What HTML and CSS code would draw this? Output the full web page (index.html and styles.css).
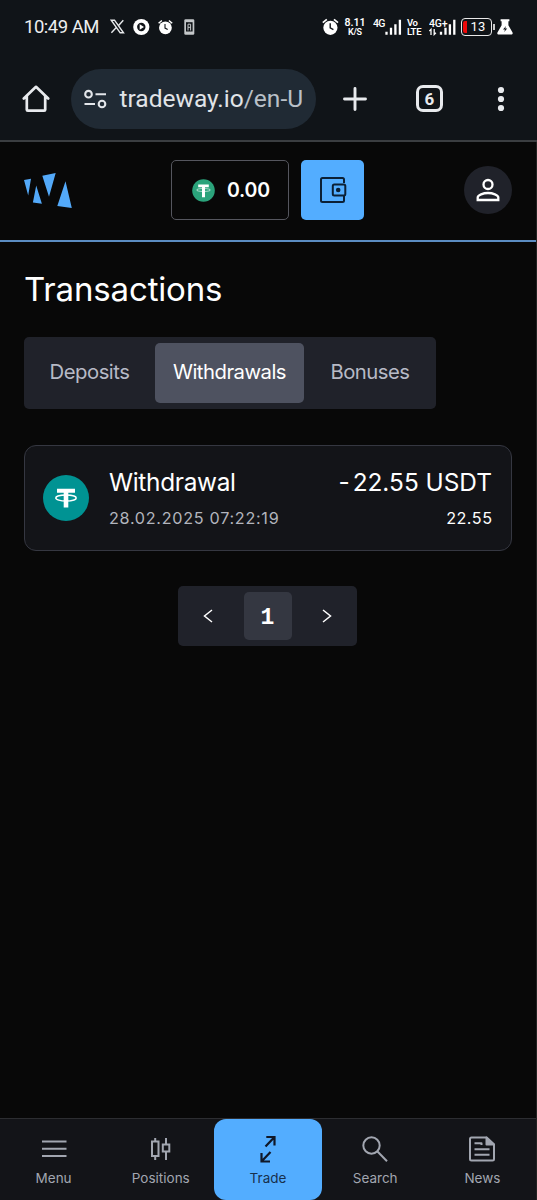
FILE: index.html
```html
<!DOCTYPE html>
<html lang="en">
<head>
<meta charset="utf-8">
<title>Transactions</title>
<link rel="stylesheet" href="styles.css">
</head>
<body>
<div class="screen">
  <div class="status">
    <span class="clock">10:49 AM</span>
    <svg class="st-left" width="88" height="18" viewBox="0 0 88 18">
      <g fill="none" stroke="#e8eaec" stroke-width="1.4"><path d="M1.200 2.200h3.300l9 12.600h-3.300zM13.300 2.200L8.400 7.700M6.300 9.600L1.400 14.800"/></g>
      <circle cx="31.3" cy="9" r="8.1" fill="#fff"/>
      <circle cx="31.3" cy="9" r="4.200" fill="#101418"/>
      <path d="M29.700 6.200l4.300 2.800-4.300 2.800z" fill="#fff"/>
      <circle cx="55.4" cy="9.8" r="6.4" fill="#fff"/>
      <path d="M48.600 5.300l3.300-2.800M62.200 5.300l-3.300-2.800" stroke="#fff" stroke-width="1.5"/>
      <path d="M55 6.100v4l2.700 1.400" fill="none" stroke="#101418" stroke-width="1.1"/>
      <rect x="74.300" y="1.300" width="10" height="15.500" rx="1.300" fill="#c4c7c9"/>
      <rect x="76" y="4.200" width="6.600" height="9.300" fill="#101418"/>
      <path d="M78 12.500V6.200h2.600v6.300M78 9.300h2.600" fill="none" stroke="#c4c7c9" stroke-width="1"/>
    </svg>
    <svg class="alarm" width="17" height="18" viewBox="0 0 17 18">
      <circle cx="8.4" cy="9.8" r="7.1" fill="#fff"/>
      <path d="M.8 4.700l4-3.400M16 4.700l-4-3.400" stroke="#fff" stroke-width="1.7"/>
      <path d="M8.200 5.200v4.700l3.200 1.800" fill="none" stroke="#101418" stroke-width="1.4"/>
    </svg>
    <span class="pair speed"><b>8.11</b><i>K/S</i></span>
    <svg class="signal" width="30" height="18" viewBox="0 0 30 18">
      <text x="0" y="9.300" textLength="12.5" class="tiny">4G</text>
      <path d="M13.500 16.700v-3M18 16.700V9.800M22.400 16.700V6.300M26.900 16.700V1.700" stroke="#fff" stroke-width="2.3"/>
    </svg>
    <span class="pair volte"><b>Vo</b><i>LTE</i></span>
    <svg class="signal" width="28" height="18" viewBox="0 0 28 18">
      <text x="0" y="9.300" textLength="18.5" class="tiny">4G+</text>
      <path d="M2 17V11.300L.3 13M5.200 11v5.500l1.700-1.700" fill="none" stroke="#fff" stroke-width="1.3"/>
      <path d="M12 16.700v-3M16.500 16.700V9.800M20.900 16.700V6.300M25.300 16.700V1.700" stroke="#fff" stroke-width="2.3"/>
    </svg>
    <span class="battery"><span class="charge"></span>13</span><span class="nub"></span>
    <svg class="flask" width="16" height="18" viewBox="0 0 16 18">
      <path d="M3.600 1.200h8.800v2h-1v4l4 7c.8 1.400-.1 2.400-1.200 2.400H1.800C.5 16.600-.2 15.500.6 14.200L4.600 7.200v-4h-1z" fill="#fff"/>
      <path d="M9 8l-3 3.500h2L7.200 14l3-3.400H8.200z" fill="#101418"/>
    </svg>
  </div>

  <div class="toolbar">
    <svg class="home" width="28" height="28" viewBox="0 0 28 28" fill="none" stroke="#e8eaed" stroke-width="2.7" stroke-linejoin="round" stroke-linecap="round"><path d="M1.800 13.500L14 1.800l12.200 11.700M4.800 11v13.700q0 1 1 1h16.400q1 0 1-1V11"/></svg>
    <div class="address">
      <svg width="23" height="20" viewBox="0 0 23 20" fill="none" stroke="#e3e6ea" stroke-width="2.100"><circle cx="4.500" cy="5.200" r="3.300"/><path d="M11.500 5.200H22M.5 15H11"/><circle cx="18" cy="15" r="3.300"/></svg>
      <span class="url">tradeway.io<span class="path">/en-U</span></span>
    </div>
    <svg class="plus" width="24" height="24" viewBox="0 0 24 24" stroke="#e8eaed" stroke-width="2.900" stroke-linecap="round"><path d="M12 1.500v21M1.500 12h21"/></svg>
    <span class="tabs-count">6</span>
    <svg class="dots" width="8" height="26" viewBox="0 0 8 26" fill="#e8eaed"><circle cx="4" cy="4" r="3.100"/><circle cx="4" cy="13" r="3.100"/><circle cx="4" cy="22" r="3.100"/></svg>
  </div>

  <div class="app">
    <header class="header">
      <svg class="logo" width="48" height="36" viewBox="0 0 48 36" fill="#53a9f9"><path d="M0 7l7-1.200L4.200 22.500zM12.200 12.500l5.700 18.200-9-1.200zM18.300 2.800L31.700 0 25 23.700zM41.500 8.200l6.300 26.700-14.500-2z"/></svg>
      <div class="balance">
        <svg width="23" height="23" viewBox="0 0 23 23"><circle cx="11.500" cy="11.500" r="11.300" fill="#2ba37b"/><path d="M6.200 5.500h10.600v2.700H13v10h-3v-10H6.200z" fill="#fff"/><ellipse cx="11.500" cy="11" rx="7" ry="1.500" fill="none" stroke="#fff" stroke-width=".6"/></svg>
        <span>0.00</span>
      </div>
      <div class="wallet">
        <svg width="27" height="26" viewBox="0 0 27 26" fill="none" stroke="#0b2036" stroke-width="2"><path d="M24 6V2.500Q24 1 22.500 1h-20Q1 1 1 2.500v21Q1 25 2.500 25h20q1.500 0 1.500-1.500V19"/><rect x="12.800" y="7.500" width="12.500" height="11" rx="1.500"/><circle cx="18.200" cy="13" r="1.300" fill="#0b2036"/></svg>
      </div>
      <div class="avatar">
        <svg width="24" height="24" viewBox="0 0 24 24" fill="none" stroke="#fff" stroke-width="2.300"><circle cx="12" cy="6.500" r="4.500"/><path d="M1.700 22v-2.500c0-2.500 5.500-4.500 10.300-4.500s10.300 2 10.300 4.500V22z"/></svg>
      </div>
    </header>

    <main class="main">
      <h1 class="title">Transactions</h1>
      <div class="tabs"><span class="tab dep">Deposits</span><span class="tab active">Withdrawals</span><span class="tab bon">Bonuses</span></div>
      <div class="card">
        <svg width="46" height="46" viewBox="0 0 46 46"><circle cx="23" cy="23" r="23" fill="#009393"/><path d="M14 13.800h18v4h-6.700v14.700h-4.600V17.800H14z" fill="#fff"/><ellipse cx="23" cy="23" rx="10.200" ry="3" fill="none" stroke="#fff" stroke-width="1.500"/></svg>
        <div class="info"><span class="kind">Withdrawal</span><span class="date">28.02.2025 07:22:19</span></div>
        <div class="amounts"><span class="amount"><span class="minus">-</span>22.55 USDT</span><span class="sub">22.55</span></div>
      </div>
      <div class="pager">
        <span class="page"><svg width="10" height="14" viewBox="0 0 10 14" fill="none" stroke="#fff" stroke-width="1.500"><path d="M9 1L1.500 7 9 13"/></svg></span>
        <span class="page current">1</span>
        <span class="page"><svg width="10" height="14" viewBox="0 0 10 14" fill="none" stroke="#fff" stroke-width="1.500"><path d="M1 1l7.500 6L1 13"/></svg></span>
      </div>
    </main>

    <nav class="nav">
      <span class="item"><svg width="28" height="28" viewBox="0 0 28 28" stroke="#a2a6b0" stroke-width="2"><path d="M2 6.500h24.500M2 13.800h24.500M2 21h24.500"/></svg>Menu</span>
      <span class="item"><svg width="28" height="28" viewBox="0 0 28 28" fill="none" stroke="#a2a6b0" stroke-width="2"><path d="M8.200 3v3.500M8.200 21v4M19 3v6.500M19 16.500V25"/><rect x="5" y="6.500" width="6.500" height="14.500"/><rect x="15.800" y="9.500" width="6.500" height="7"/></svg>Positions</span>
      <span class="item trade"><svg width="28" height="28" viewBox="0 0 28 28" fill="none" stroke="#101828" stroke-width="2.200"><path d="M12.300 2H20.500V10.500M20.500 2L11.500 11.500M7.500 18V26.500H16M7.500 26.500L16.500 17"/></svg>Trade</span>
      <span class="item"><svg width="28" height="28" viewBox="0 0 28 28" fill="none" stroke="#a2a6b0" stroke-width="2"><circle cx="10.500" cy="10.500" r="8.200"/><path d="M16.500 16.500l9.500 9.700"/></svg>Search</span>
      <span class="item"><svg width="28" height="28" viewBox="0 0 28 28" fill="none" stroke="#a2a6b0" stroke-width="2" stroke-linejoin="round"><path d="M18.500 2.500H3.500Q2 2.500 2 4v20q0 1.500 1.500 1.500h21Q26 25.500 26 24V9.500z"/><path d="M18.500 2.500v7H26z" fill="#a2a6b0"/><path d="M6.500 8.200h7v1.800M6.500 14.300h15M6.500 19.800h15"/></svg>News</span>
    </nav>
  </div>
</div>
</body>
</html>
```
FILE: styles.css
```css
* { box-sizing: border-box; }
body { margin: 0; background: #080808; }
.screen { width: 537px; height: 1200px; display: flex; flex-direction: column; font-family: Inter, "Noto Sans", sans-serif; color: #fff; overflow: hidden; }
.screen svg { display: block; flex: none; }

.status { height: 54px; background: #101418; display: flex; align-items: center; padding: 0 24px; font-family: Roboto, sans-serif; }
.clock { width: 75px; font-size: 18.5px; line-height: 22px; letter-spacing: -0.5px; color: #eceeef; white-space: nowrap; }
.st-left { margin-left: 11px; }
.alarm { margin-left: 124.5px; }
.pair { display: flex; flex-direction: column; white-space: nowrap; }
.pair b, .pair i { font-style: normal; font-weight: 600; }
.speed { align-items: center; width: 20px; margin-left: 5.5px; }
.speed b { font-size: 10.5px; line-height: 10px; }
.speed i { font-size: 9px; line-height: 8px; letter-spacing: -0.3px; }
.signal { margin-left: 8px; }
.tiny { font-size: 10.5px; font-weight: 500; fill: #fff; }
.volte { margin-left: 4px; width: 17px; font-size: 9.5px; line-height: 9.5px; letter-spacing: -0.3px; }
.volte + .signal { margin-left: 5px; }
.battery { width: 32px; height: 18px; margin-left: 4px; border: 1.5px solid #e9e9e9; border-radius: 4px; display: flex; align-items: center; gap: 3.5px; padding-left: 1.5px; font-size: 13px; line-height: 14px; }
.charge { width: 4px; height: 12px; background: #ec0909; border-radius: 2px 0 0 2px; }
.nub { width: 2px; height: 6px; background: #c8c8c8; margin: 0 2px 0 1px; }

.toolbar { height: 88px; background: #101418; border-bottom: 2px solid #3b3e41; display: flex; align-items: center; padding: 3px 0 0 22px; }
.address { width: 245px; height: 60px; margin-left: 21px; border-radius: 30px; background: #202a34; display: flex; align-items: center; padding-left: 13px; gap: 12.5px; }
.url { font-family: Roboto, sans-serif; font-size: 24.5px; line-height: 30px; color: #e1e4e8; white-space: nowrap; }
.path { color: #b9c0c8; }
.plus { margin-left: 27px; }
.tabs-count { width: 27px; height: 27px; margin-left: 49px; border: 3px solid #e8eaed; border-radius: 7px; display: flex; align-items: center; justify-content: center; font: 700 17px/18px Roboto, sans-serif; color: #e8eaed; }
.dots { margin-left: 54px; }

.app { flex: 1; display: flex; flex-direction: column; background: #080808; border-right: 1px solid #222322; }
.header { height: 100px; border-bottom: 2px solid #5b8cc2; display: flex; align-items: center; padding: 0 24px 2px; }
.logo { margin-top: 2px; }
.balance { width: 118px; height: 60px; margin-left: 99px; border: 1.5px solid #55565e; border-radius: 5px; display: flex; align-items: center; padding-left: 20px; gap: 12px; font-size: 19.5px; font-weight: 600; letter-spacing: -0.2px; }
.wallet { width: 63px; height: 60px; margin-left: 12px; padding-left: 2px; background: #53adff; border-radius: 5px; display: flex; align-items: center; justify-content: center; }
.avatar { width: 48px; height: 48px; margin-left: auto; border-radius: 50%; background: #20222a; display: flex; align-items: center; justify-content: center; }

.main { flex: 1; padding: 27px 24px 0; display: flex; flex-direction: column; }
.title { margin: 0; font-size: 33px; line-height: 40px; font-weight: 400; letter-spacing: -0.15px; }
.tabs { width: 412px; height: 72px; margin-top: 28px; padding: 6px; border-radius: 5px; background: #20222a; display: flex; }
.tab { height: 60px; display: flex; align-items: center; justify-content: center; padding-bottom: 4px; font-size: 20.3px; letter-spacing: -0.5px; color: #b7bac6; }
.dep { width: 125px; padding-right: 6px; }
.active { width: 149px; background: #4e5260; border-radius: 5px; color: #fff; }
.bon { width: 126px; padding-left: 6px; }
.card { height: 106px; margin-top: 36px; border: 1.5px solid #353741; border-radius: 12px; background: #131418; display: flex; align-items: center; padding: 0 19px 1px 18px; }
.info, .amounts { display: flex; flex-direction: column; white-space: nowrap; }
.card svg { margin-top: 1px; }
.info { margin-left: 20px; }
.kind, .amount { font-size: 24.4px; line-height: 32px; }
.kind { letter-spacing: -0.3px; }
.date, .sub { margin-top: 9px; font-size: 16.2px; line-height: 22px; }
.date { color: #b2b5bd; letter-spacing: 0.7px; }
.sub { letter-spacing: 0.5px; margin-right: -0.5px; }
.amounts { margin-left: auto; align-items: flex-end; }
.minus { margin-right: 3px; }
.pager { align-self: center; width: 179px; height: 60px; margin-top: 35px; margin-right: 1px; padding: 6px; border-radius: 5px; background: #20222a; display: flex; justify-content: space-between; }
.page { width: 48px; height: 48px; border-radius: 5px; display: flex; align-items: center; justify-content: center; }
.current { background: #343741; font: 700 23px "Liberation Mono", monospace; padding-top: 3px; }

.nav { height: 82px; border-top: 1px solid #2c2d31; background: #131418; display: grid; grid-template-columns: repeat(5, 1fr); }
.item { display: flex; flex-direction: column; align-items: center; padding-top: 16px; font-size: 13.5px; line-height: 18px; gap: 6px; color: #a2a6b0; }
.trade { background: #53adff; border-radius: 12px; color: #17304d; }
```
